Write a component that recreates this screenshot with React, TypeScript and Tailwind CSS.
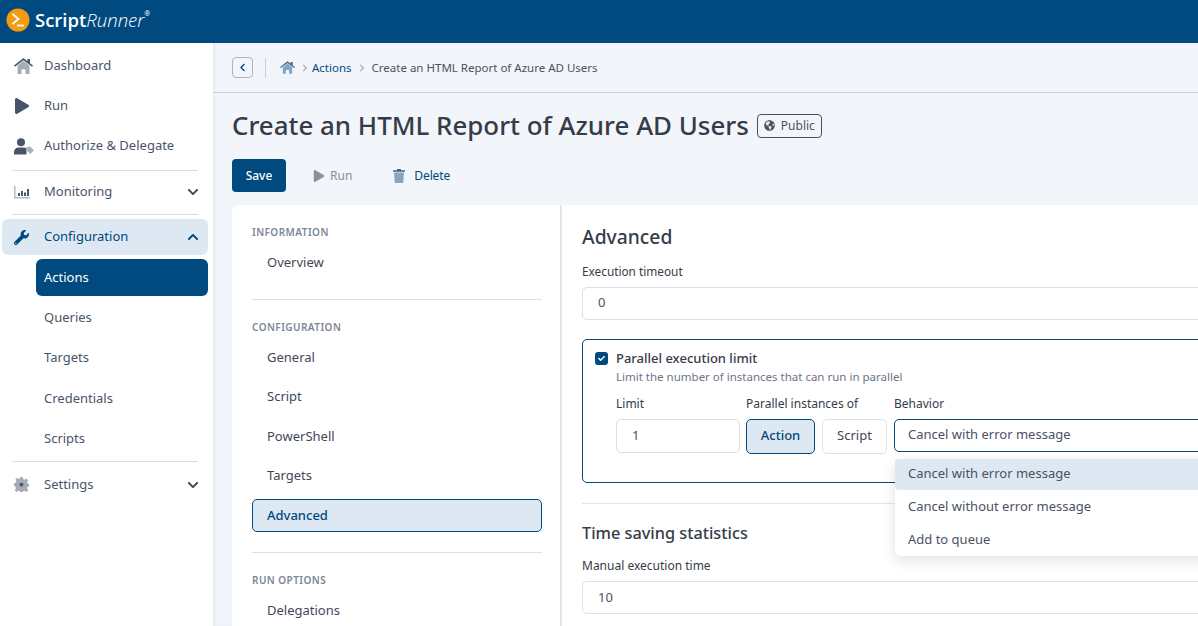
import React from "react";
import { FaPlay, FaWrench, FaGlobeAmericas, FaCheck, FaChevronLeft, FaChevronRight, FaChevronDown, FaChevronUp } from "react-icons/fa";

// two-tone icons, the icon set in the app is duotone
const HomeIcon = ({ w, h, roof, body, cls }: { w: number; h: number; roof: string; body: string; cls?: string }) => (
  <svg width={w} height={h} viewBox="0 0 24 20" className={cls}>
    <path d="M4.5 9.5L12 3.6l7.5 5.9V20h-5v-6h-5v6h-5z" fill={body} />
    <path d="M12 0L17 3.9V1h3.2v5.4L24 9.4l-1.2 1.5L12 2.6 1.2 10.9 0 9.4z" fill={roof} />
  </svg>
);

const UserTagIcon = () => (
  <svg width="20" height="17" viewBox="0 0 20 17">
    <circle cx="7" cy="4.2" r="4" fill="#4a5468" />
    <path d="M0 16.5v-2.7C0 11 2.2 9.4 4.5 9.4h5c1.200 0 2.200.4 3 1v6.100z" fill="#4a5468" />
    <path d="M12 9.800l3.800-1.500 4.200 4-3.700 3.700-4.300-4z" fill="#aab1bc" />
  </svg>
);

const GearIcon = () => (
  <svg width="15" height="15" viewBox="0 0 16 16">
    <path d="M6.600 0h2.800l.4 2.200 1.500.6 1.900-1.300 2 2-1.300 1.900.6 1.500 2.200.4v2.800l-2.200.4-.6 1.500 1.300 1.900-2 2-1.900-1.300-1.500.6-.4 2.200H6.600l-.4-2.200-1.500-.6-1.900 1.300-2-2 1.300-1.900-.6-1.500L-.1 9.400V6.600l2.200-.4.6-1.500L1.400 2.800l2-2 1.900 1.300 1-.6z" fill="#a6acb7" />
    <circle cx="8" cy="8" r="2" fill="#4a5468" />
  </svg>
);

const TrashIcon = () => (
  <svg width="12" height="14" viewBox="0 0 12 14">
    <path d="M1 3.500h10l-.7 9.500a1 1 0 0 1-1 1H2.700a1 1 0 0 1-1-1z" fill="#85a6c2" />
    <path d="M0 1.300h3.700L4.300 0h3.400l.6 1.300H12v1.500H0z" fill="#35688f" />
  </svg>
);

const SideItem = ({ icon, label, active, chevron, top }: { icon: React.ReactNode; label: string; active?: boolean; chevron?: "up" | "down"; top?: string }) => (
  <div className={`flex h-9 items-center rounded-md pl-[12px] pr-[8px] ${active ? "bg-[#dde8f2] text-[#004a7f]" : "text-[#4a5468]"} ${top ?? ""}`}>
    <span className="flex w-[30px] shrink-0 items-center">{icon}</span>
    <span className="text-[13px]">{label}</span>
    {chevron === "down" && <FaChevronDown className="ml-auto mr-[1px] text-[12px] text-[#3b4a5e]" />}
    {chevron === "up" && <FaChevronUp className="ml-auto mr-[1px] text-[12px] text-[#004a7f]" />}
  </div>
);

const SubItem = ({ label, active }: { label: string; active?: boolean }) => (
  <div className={`ml-[34px] flex items-center rounded-md px-[8px] text-[13px] ${active ? "h-[37px] bg-[#004a7f] text-white" : "h-[40.4px] text-[#4a5468]"}`}>
    {label}
  </div>
);

const Hr = ({ cls }: { cls: string }) => <div className={`mx-[10px] h-px bg-[#d9dce4] ${cls}`} />;

const Sidebar = () => (
  <aside className="z-10 flex w-[213px] shrink-0 flex-col bg-white pl-[2px] pr-[5px] pt-[5px]">
    <SideItem label="Dashboard" icon={<HomeIcon w={19} h={16} roof="#4a5468" body="#a6acb7" />} />
    <SideItem label="Run" top="mt-1" icon={<FaPlay className="text-[16px] text-[#4a5468]" />} />
    <SideItem label="Authorize & Delegate" top="mt-1" icon={<UserTagIcon />} />
    <Hr cls="mt-[6px]" />
    <SideItem label="Monitoring" top="mt-[3px]" chevron="down" icon={
      <svg width="16" height="13" viewBox="0 0 16 13">
        <path d="M0 0h1.500v11H16v1.500H0z" fill="#b4bac4" />
        <path d="M4 7h2v3H4zM7 5h2v5H7zM10 6.500h2V10h-2zM13 3h2v7h-2z" fill="#4a5468" />
      </svg>
    } />
    <Hr cls="mt-[4px]" />
    <SideItem label="Configuration" active top="mt-[4px]" chevron="up" icon={<FaWrench className="text-[15px] text-[#004a7f]" />} />
    <div className="mt-[4px]">
      <SubItem label="Actions" active />
      <div className="h-[1.5px]" />
      <SubItem label="Queries" />
      <SubItem label="Targets" />
      <SubItem label="Credentials" />
      <SubItem label="Scripts" />
    </div>
    <Hr cls="mt-[1.5px]" />
    <SideItem label="Settings" top="mt-[5px]" chevron="down" icon={<GearIcon />} />
  </aside>
);

const NavLabel = ({ children, cls }: { children: React.ReactNode; cls?: string }) => (
  <div className={`text-[10px] font-semibold uppercase leading-[14px] tracking-[0.45px] text-[#7d8699] ${cls ?? ""}`}>{children}</div>
);

const NavItem = ({ label, active }: { label: string; active?: boolean }) => (
  <div className={`mb-[6.5px] flex h-[33px] items-center rounded-[5px] border px-[14px] text-[13px] ${active ? "border-[#004a7f] bg-[#dde8f2] font-medium text-[#004a7f]" : "border-transparent text-[#3f4756]"}`}>
    {label}
  </div>
);

const SidePanel = () => (
  <div className="w-[330px] shrink-0 border-r-2 border-[#e3e6ec] pl-[20px] pr-[18px] pt-[20px]">
    <NavLabel>Information</NavLabel>
    <div className="mt-[7.5px]"><NavItem label="Overview" /></div>
    <div className="mt-[19px] h-px bg-[#dcdfe7]" />
    <NavLabel cls="mt-[20px]">Configuration</NavLabel>
    <div className="mt-[7.5px]">
      <NavItem label="General" />
      <NavItem label="Script" />
      <NavItem label="PowerShell" />
      <NavItem label="Targets" />
      <NavItem label="Advanced" active />
    </div>
    <div className="mt-[20px] h-px bg-[#dcdfe7]" />
    <NavLabel cls="mt-[20px]">Run options</NavLabel>
    <div className="mt-[7.5px]"><NavItem label="Delegations" /></div>
  </div>
);

const Input = ({ value, cls }: { value: string; cls?: string }) => (
  <div className={`flex h-[33px] items-center rounded-[5px] border border-[#dcdfe6] bg-white px-[15px] text-[13px] text-[#4a5262] ${cls ?? ""}`}>{value}</div>
);

const Advanced = () => (
  <div className="w-[760px] shrink-0 px-[20px] pt-[18px]">
    <h2 className="text-[19.3px] font-medium leading-[28px] text-[#353c49]">Advanced</h2>
    <div className="mt-[11px] text-[11.8px] leading-[18px] text-[#353c49]">Execution timeout</div>
    <Input value="0" cls="mt-[7px] pb-[1px]" />
    <div className="relative mt-[19px] h-[144px] rounded-[5px] border border-[#004a7f] px-[12px] pt-[9px]">
      <div className="flex items-center">
        <span className="flex h-[13px] w-[13px] items-center justify-center rounded-[3px] bg-[#004a7f]">
          <FaCheck className="text-[7px] text-white" />
        </span>
        <span className="ml-[8px] text-[13px] font-medium leading-[18px] text-[#353c49]">Parallel execution limit</span>
      </div>
      <div className="ml-[21px] mt-[1px] text-[11.5px] leading-[17px] text-[#6d7486]">Limit the number of instances that can run in parallel</div>
      <div className="ml-[21px] mt-[10px] flex">
        <div className="w-[124px]">
          <div className="text-[12px] leading-[18px] text-[#353c49]">Limit</div>
          <Input value="1" cls="mt-[6px] h-[34px]" />
        </div>
        <div className="ml-[6px] w-[148px]">
          <div className="text-[12px] leading-[18px] text-[#353c49]">Parallel instances of</div>
          <div className="mt-[6px] flex gap-[7px]">
            <div className="flex h-[35px] w-[69px] items-center justify-center rounded-[5px] border border-[#004a7f] bg-[#dde8f2] pb-[1px] text-[13px] font-medium text-[#004a7f]">Action</div>
            <div className="flex h-[35px] w-[65px] items-center justify-center rounded-[5px] border border-[#dcdfe6] bg-white pb-[1px] text-[13px] text-[#3f4756]">Script</div>
          </div>
        </div>
        <div className="flex-1">
          <div className="text-[12px] leading-[18px] text-[#353c49]">Behavior</div>
          <div className="mt-[6px] flex h-[33px] items-center rounded-[5px] border border-[#004a7f] bg-white px-[13px] pb-[1px] text-[13px] text-[#4a5262]">Cancel with error message</div>
        </div>
      </div>
      <div className="absolute left-[312px] top-[119px] z-10 w-[440px] rounded-[5px] bg-white text-[13px] text-[#4a5262] shadow-[0_4px_14px_rgba(30,40,60,0.14)]">
        <div className="flex h-[31px] items-center rounded-[4px] bg-[#dde8f2] px-[13px] pb-[1px]">Cancel with error message</div>
        <div className="flex h-[33px] items-center px-[13px]">Cancel without error message</div>
        <div className="flex h-[33px] items-center px-[13px]">Add to queue</div>
      </div>
    </div>
    <div className="mt-[20px] h-px bg-[#e3e6ec]" />
    <h3 className="mt-[16px] text-[16.3px] font-medium leading-[26px] text-[#353c49]">Time saving statistics</h3>
    <div className="mt-[11px] text-[12px] leading-[18px] text-[#353c49]">Manual execution time</div>
    <Input value="10" cls="mt-[6px]" />
  </div>
);

export default function App() {
  return (
    <div className="flex h-[626px] w-[1198px] flex-col overflow-hidden bg-[#f2f5f9] font-['Noto_Sans',sans-serif]">
      <header className="flex h-[43px] shrink-0 items-center bg-[#004a7f] pb-[3px] pl-[6px]">
        <svg width="24" height="24" viewBox="0 0 24 24">
          <circle cx="12" cy="12" r="11.5" fill="#f39c12" />
          <path d="M6.500 6l6 5-6 5" fill="none" stroke="#fff" strokeWidth="1.800" />
          <path d="M11 17.500h7" stroke="#fff" strokeWidth="1.800" />
        </svg>
        <span className="ml-[5px] font-['Open_Sans',sans-serif] text-[18.5px] font-semibold text-white">Script</span>
        <span className="font-['Open_Sans',sans-serif] text-[18.5px] font-light italic text-white">Runner</span>
        <span className="mb-[12px] text-[7px] text-white">®</span>
      </header>
      <div className="flex min-h-0 flex-1">
        <Sidebar />
        <main className="min-w-0 flex-1 overflow-hidden shadow-[inset_2px_0_3px_rgba(60,70,90,0.05)]">
          <div className="flex h-[50px] items-center border-b border-[#c9ced6] pl-[19px]">
            <button className="flex h-[21px] w-[21px] items-center justify-center rounded-[4px] border border-[#a9b4c4] text-[#004a7f]">
              <FaChevronLeft className="text-[9px]" />
            </button>
            <span className="ml-[12px] h-[20px] w-px bg-[#c9ced6]" />
            <HomeIcon w={15} h={13} roof="#35688f" body="#85a6c2" cls="ml-[14px]" />
            <FaChevronRight className="ml-[6px] text-[8px] text-[#a5abb6]" />
            <span className="ml-[3px] text-[11.5px] text-[#004a7f]">Actions</span>
            <FaChevronRight className="ml-[6px] text-[8px] text-[#a5abb6]" />
            <span className="ml-[6px] text-[11.5px] text-[#4a5262]">Create an HTML Report of Azure AD Users</span>
          </div>
          <div className="flex items-center pl-[19px] pt-[14px]">
            <h1 className="text-[25.9px] font-medium leading-[36px] text-[#353c49]">Create an HTML Report of Azure AD Users</h1>
            <span className="ml-[8px] mt-[1px] flex h-[24px] items-center rounded-[4px] border border-[#4a5262] px-[6px] text-[12px] text-[#4a5262]">
              <FaGlobeAmericas className="mr-[6px] text-[11px]" />Public
            </span>
          </div>
          <div className="mt-[16px] flex items-center pl-[19px]">
            <button className="h-[33px] w-[54px] rounded-[4px] bg-[#004a7f] text-[12px] font-medium text-white">Save</button>
            <span className="ml-[27px] flex items-center text-[12px] text-[#8a909c]">
              <FaPlay className="mr-[5px] text-[12px]" />Run
            </span>
            <span className="ml-[41px] flex items-center text-[12px] text-[#004a7f]">
              <TrashIcon />
              <span className="ml-[9px] tracking-[-0.1px]">Delete</span>
            </span>
          </div>
          <div className="ml-[19px] mt-[13px] flex h-[500px] w-[1100px] rounded-tl-lg bg-white">
            <SidePanel />
            <Advanced />
          </div>
        </main>
      </div>
    </div>
  );
}
